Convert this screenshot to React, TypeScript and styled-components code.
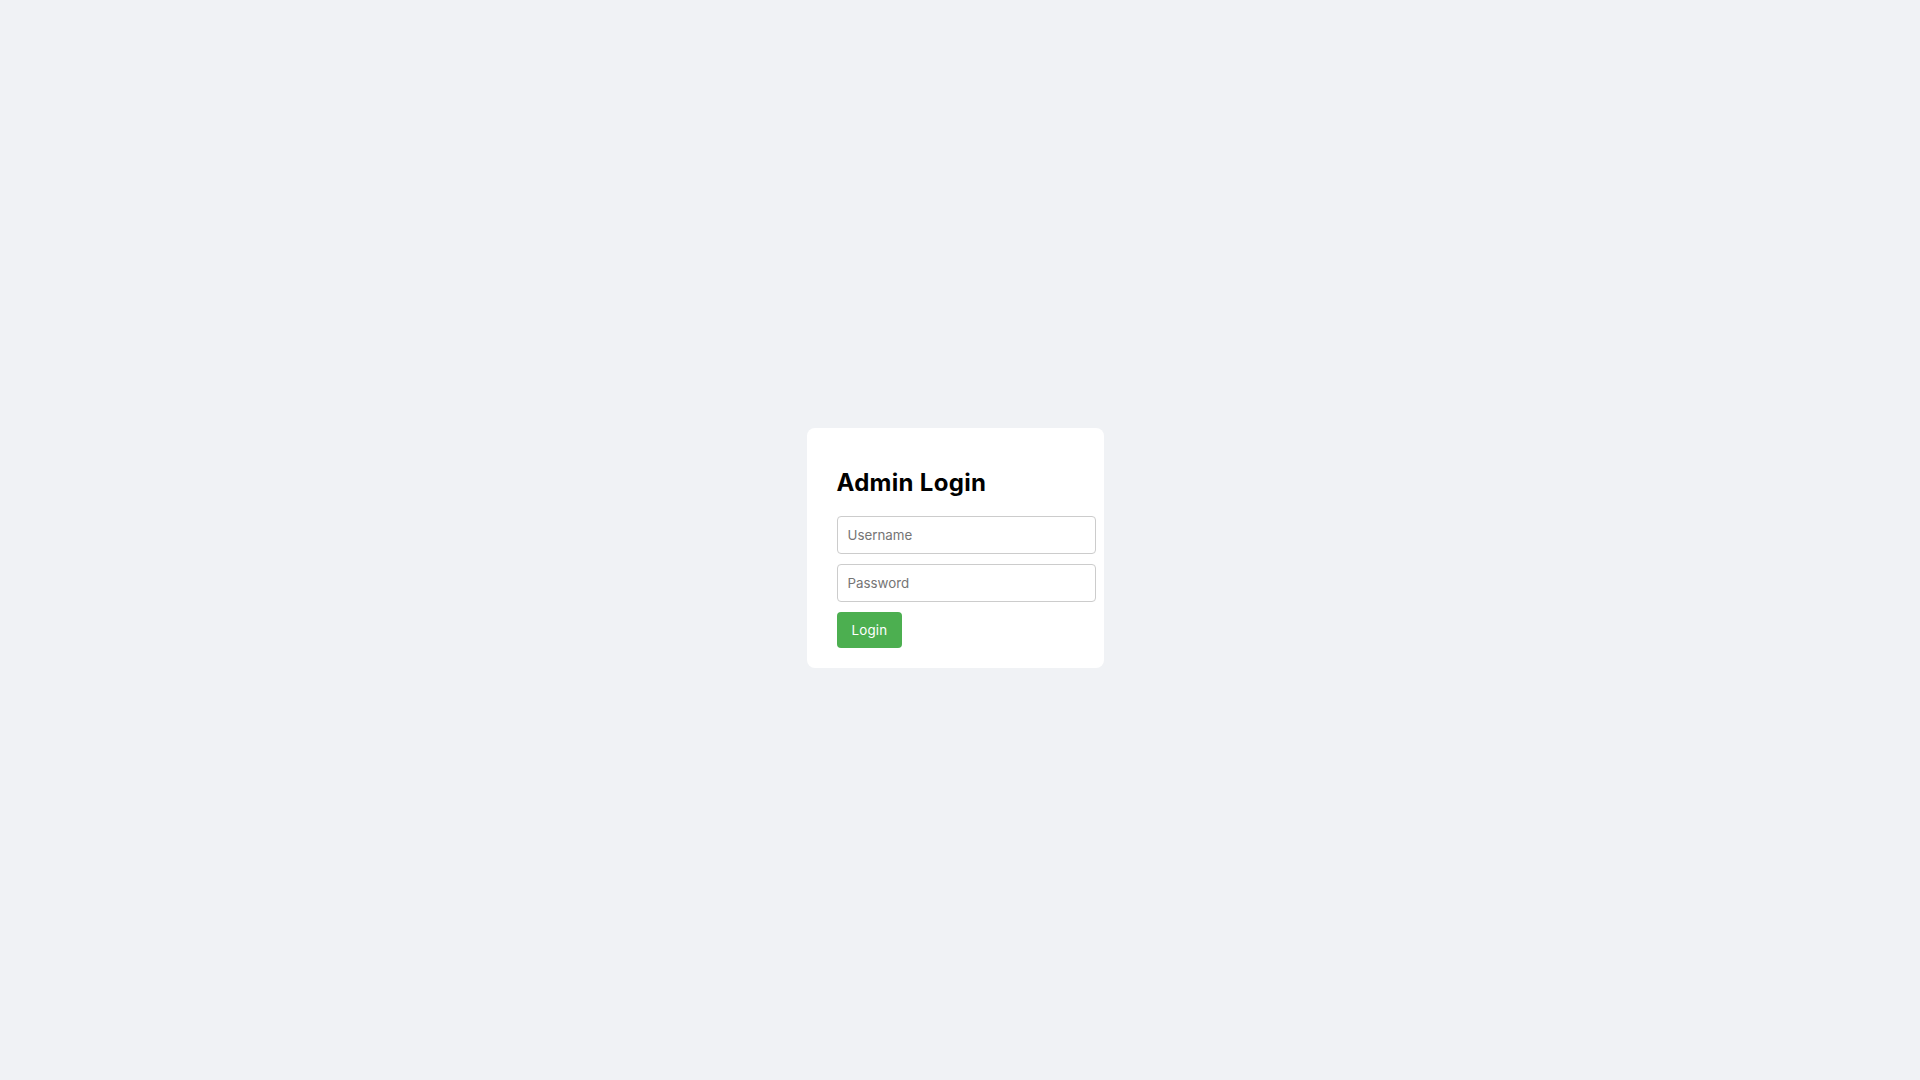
import React from 'react';
import styled, { createGlobalStyle } from 'styled-components';

const GlobalStyle = createGlobalStyle`
    body {
        background-color: #f0f2f5;
        font-family: Inter, "Noto Sans", Arial, sans-serif;
    }
`;

// right padding leaves room for the scrollbar gutter seen in the screenshot
const Page = styled.div`
    display: flex;
    justify-content: center;
    align-items: center;
    min-height: 100vh;
    padding-right: 10px;
`;

const Card = styled.form`
    width: 237px;
    padding: 20px 30px;
    background-color: #fff;
    border-radius: 8px;
`;

const Title = styled.h2`
    font-family: Inter, Arial, sans-serif;
    font-size: 24px;
    font-weight: 700;
    letter-spacing: 0.3px;
    color: #000;
`;

const Input = styled.input`
    display: block;
    width: 100%;
    padding: 10px;
    margin-bottom: 10px;
    border: 1px solid #ccc;
    border-radius: 4px;
    font-family: Inter, Arial, sans-serif;
    font-size: 13.333px;
    color: #222;
    outline: none;

    &::placeholder {
        color: #757575;
    }
`;

const Button = styled.button`
    display: block;
    padding: 10px 15px;
    border: none;
    border-radius: 4px;
    background-color: #4caf50;
    color: #fff;
    font-family: Inter, Arial, sans-serif;
    font-size: 13.333px;
    letter-spacing: 0.2px;
    cursor: pointer;
`;

const App: React.FC = () => {
    return (
        <>
            <GlobalStyle />
            <Page>
                <Card onSubmit={(e) => e.preventDefault()}>
                    <Title>Admin Login</Title>
                    <Input type="text" placeholder="Username" />
                    <Input type="password" placeholder="Password" />
                    <Button type="submit">Login</Button>
                </Card>
            </Page>
        </>
    );
};

export default App;
